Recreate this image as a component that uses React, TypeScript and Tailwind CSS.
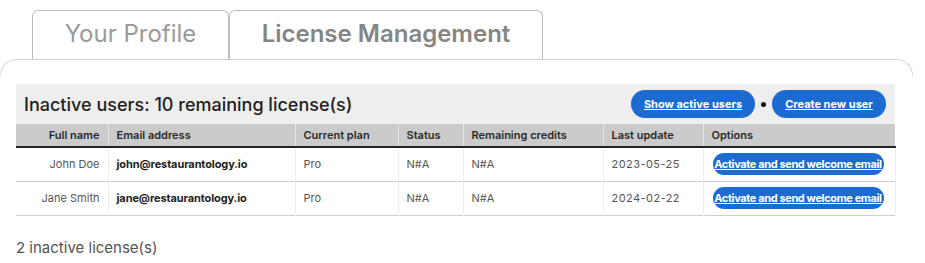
import React from 'react';

const users = [
  { name: 'John Doe', email: 'john@restaurantology.io', plan: 'Pro', status: 'N#A', credits: 'N#A', updated: '2023-05-25' },
  { name: 'Jane Smith', email: 'jane@restaurantology.io', plan: 'Pro', status: 'N#A', credits: 'N#A', updated: '2024-02-22' },
];

const cols = ['w-[92px]', 'w-[187px]', 'w-[103px]', 'w-[65px]', 'w-[140px]', 'w-[100px]', 'w-[192px]'];

export default function App() {
  return (
    <div className="w-[925px] h-[263px] bg-white font-['Inter',sans-serif] overflow-hidden">
      {/* tabs */}
      <div className="flex pl-[32px] pt-[10px]">
        <div className="w-[197px] h-[49px] pb-[2px] border border-b-0 border-[#bdbdbd] rounded-t-[6px] flex items-center justify-center text-[24px] text-[#9a9a9a]">
          Your Profile
        </div>
        <div className="w-[314px] h-[49px] pb-[2px] border border-b-0 border-[#bdbdbd] rounded-t-[6px] flex items-center justify-center text-[24px] font-semibold text-[#858585]">
          License Management
        </div>
      </div>

      {/* panel */}
      <div className="w-[913px]">
        {/* rounded top edge of the panel, sides fade out */}
        <div className="h-[25px] border border-b-0 border-[#cfcfcf] rounded-t-[16px] [mask-image:linear-gradient(to_bottom,black_12px,transparent_20px)]" />
        <div className="px-4">
          <div className="w-[879px]">
            <div className="h-[40px] bg-[#eeeeee] flex items-center justify-between pl-2 pr-[9px]">
              <h2 className="text-[18px] font-medium text-[#1e1e1e]">Inactive users: 10 remaining license(s)</h2>
              <div className="flex items-center gap-[6px]">
                <button className="h-[28px] w-[124px] rounded-full bg-[#1b6bd0] text-white text-[11px] font-bold underline whitespace-nowrap">Show active users</button>
                <span className="w-[5px] h-[5px] rounded-full bg-[#111]" />
                <button className="h-[28px] w-[114px] rounded-full bg-[#1b6bd0] text-white text-[11px] font-bold underline whitespace-nowrap">Create new user</button>
              </div>
            </div>

            <table className="table-fixed w-[879px] border-collapse text-[11px]">
              <colgroup>
                {cols.map((c, i) => <col key={i} className={c} />)}
              </colgroup>
              <thead>
                <tr className="h-[23px] bg-[#cbcbcb] border-b-2 border-[#222] text-[#2a2a2a]">
                  <th className="text-right pr-2 font-semibold">Full name</th>
                  <th className="text-left pl-2 font-semibold border-l border-[#e6e6e6]">Email address</th>
                  <th className="text-left pl-2 font-semibold border-l border-[#e6e6e6]">Current plan</th>
                  <th className="text-left pl-2 font-semibold border-l border-[#e6e6e6]">Status</th>
                  <th className="text-left pl-2 font-semibold border-l border-[#e6e6e6]">Remaining credits</th>
                  <th className="text-left pl-2 font-semibold border-l border-[#e6e6e6]">Last update</th>
                  <th className="text-left pl-2 font-semibold border-l border-[#e6e6e6]">Options</th>
                </tr>
              </thead>
              <tbody>
                {users.map(u => (
                  <tr key={u.email} className="h-[34px] border-b border-[#cfcfcf] text-[#555]">
                    <td className="text-right pr-2">{u.name}</td>
                    <td className="pl-2 font-bold text-[#1e1e1e] border-l border-[#ececec] tracking-[-0.01em]">{u.email}</td>
                    <td className="pl-2 border-l border-[#ececec]">{u.plan}</td>
                    <td className="pl-2 border-l border-[#ececec]">{u.status}</td>
                    <td className="pl-2 border-l border-[#ececec]">{u.credits}</td>
                    <td className="pl-2 border-l border-[#ececec] tracking-[0.04em]">{u.updated}</td>
                    <td className="pl-[9px] border-l border-r border-[#ececec]">
                      <button className="h-[22px] w-[171px] rounded-full bg-[#1b6bd0] text-white text-[11px] font-bold underline whitespace-nowrap tracking-[-0.035em]">
                        Activate and send welcome email
                      </button>
                    </td>
                  </tr>
                ))}
              </tbody>
            </table>

            <p className="mt-[21px] text-[15px] text-[#555]">2 inactive license(s)</p>
          </div>
        </div>
      </div>
    </div>
  );
}
